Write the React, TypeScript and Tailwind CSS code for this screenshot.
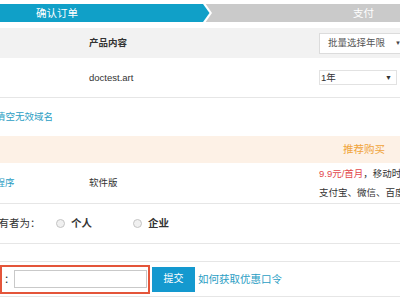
export default function App() {
  return (
    <div className="w-[400px] h-[300px] overflow-hidden bg-white text-[#333] font-['Liberation_Sans','Noto_Sans_CJK_SC',sans-serif] text-[9.5px] leading-none">
      <div className="h-[4px]" />
      {/* steps */}
      <div className="flex h-[18px]">
        <div className="w-[203px] shrink-0 bg-[#10a0c8] text-white text-[10.5px] flex items-center pl-[36px]">确认订单</div>
        <div className="relative flex-1 bg-[#cacaca] text-white text-[10.5px] flex items-center pl-[150px]">
          <svg className="absolute left-[-2px] top-0" width="12" height="18" viewBox="0 0 12 18">
            <polygon points="0,-1 4,-1 11,9 4,19 0,19" fill="#ffffff" />
            <polygon points="0,0 2,0 8.5,9 2,18 0,18" fill="#10a0c8" />
          </svg>
          支付
        </div>
      </div>
      <div className="h-[6px]" />
      {/* header */}
      <div className="flex h-[30px] items-center bg-[#f2f2f2]">
        <div className="w-[89px] shrink-0" />
        <div className="w-[230px] shrink-0 font-semibold text-[#333]">产品内容</div>
        <div className="flex h-[21px] flex-1 items-center whitespace-nowrap border border-[#dcdcdc] bg-white pl-[8px] text-[#555]">
          <span className="text-[9.5px]">批量选择年限</span>
          <span className="ml-[10px] text-[6px] text-[#444]">▼</span>
        </div>
      </div>
      {/* domain row */}
      <div className="flex h-[40px] items-center border-b border-[#e6e6e6]">
        <div className="w-[89px] shrink-0" />
        <div className="w-[230px] shrink-0">doctest.art</div>
        <div className="flex h-[15px] w-[78px] shrink-0 items-center justify-between border border-[#e2e2e2] pl-[1px] pr-[4px]">
          <span>1年</span>
          <span className="text-[7px]">▼</span>
        </div>
      </div>
      {/* clear link */}
      <div className="flex h-[38px] items-center whitespace-nowrap">
        <span className="ml-[-4px] text-[#2b9ec4]">清空无效域名</span>
      </div>
      {/* recommend bar */}
      <div className="flex h-[27px] items-center bg-[#fdf1e6] pl-[343px] text-[10.5px] text-[#f0a43c]">推荐购买</div>
      {/* product row */}
      <div className="flex h-[41px] items-center border-b border-[#e6e6e6]">
        <div className="w-[89px] shrink-0 whitespace-nowrap">
          <span className="ml-[-14px] text-[#2b9ec4]">小程序</span>
        </div>
        <div className="w-[230px] shrink-0">软件版</div>
        <div className="flex shrink-0 flex-col gap-[9px] whitespace-nowrap">
          <div>
            <span className="text-[#e2474b]">9.9元/首月</span>
            <span>，移动时代必备</span>
          </div>
          <div>支付宝、微信、百度等</div>
        </div>
      </div>
      {/* owner row */}
      <div className="flex h-[40px] items-center border-b border-[#e6e6e6] text-[10.5px]">
        <span className="ml-[-12px] w-[68px] shrink-0 whitespace-nowrap">所有者为：</span>
        <label className="flex items-center gap-[6px] font-bold">
          <span className="h-[9px] w-[9px] rounded-full border border-[#c4c4c4] bg-[#f0f0f0]" />
          个人
        </label>
        <label className="ml-[41px] flex items-center gap-[6px] font-bold">
          <span className="h-[9px] w-[9px] rounded-full border border-[#c4c4c4] bg-[#f0f0f0]" />
          企业
        </label>
      </div>
      <div className="h-[18px] border-b border-[#e6e6e6]" />
      {/* coupon row */}
      <div className="flex h-[35px] items-center border-b border-[#e6e6e6]">
        <div className="flex h-[29px] w-[150px] shrink-0 items-center border-2 border-[#e4553a] pl-[2px]">
          <span className="w-[10px] text-[10.5px]">：</span>
          <div className="h-[18px] w-[133px] border border-[#c9c9c9] bg-white" />
        </div>
        <button className="ml-[2px] flex h-[25px] w-[43px] shrink-0 items-center justify-center bg-[#1499cf] text-[10px] text-white">提交</button>
        <span className="ml-[3px] whitespace-nowrap text-[10.5px] text-[#2b9ec4]">如何获取优惠口令</span>
      </div>
    </div>
  )
}
